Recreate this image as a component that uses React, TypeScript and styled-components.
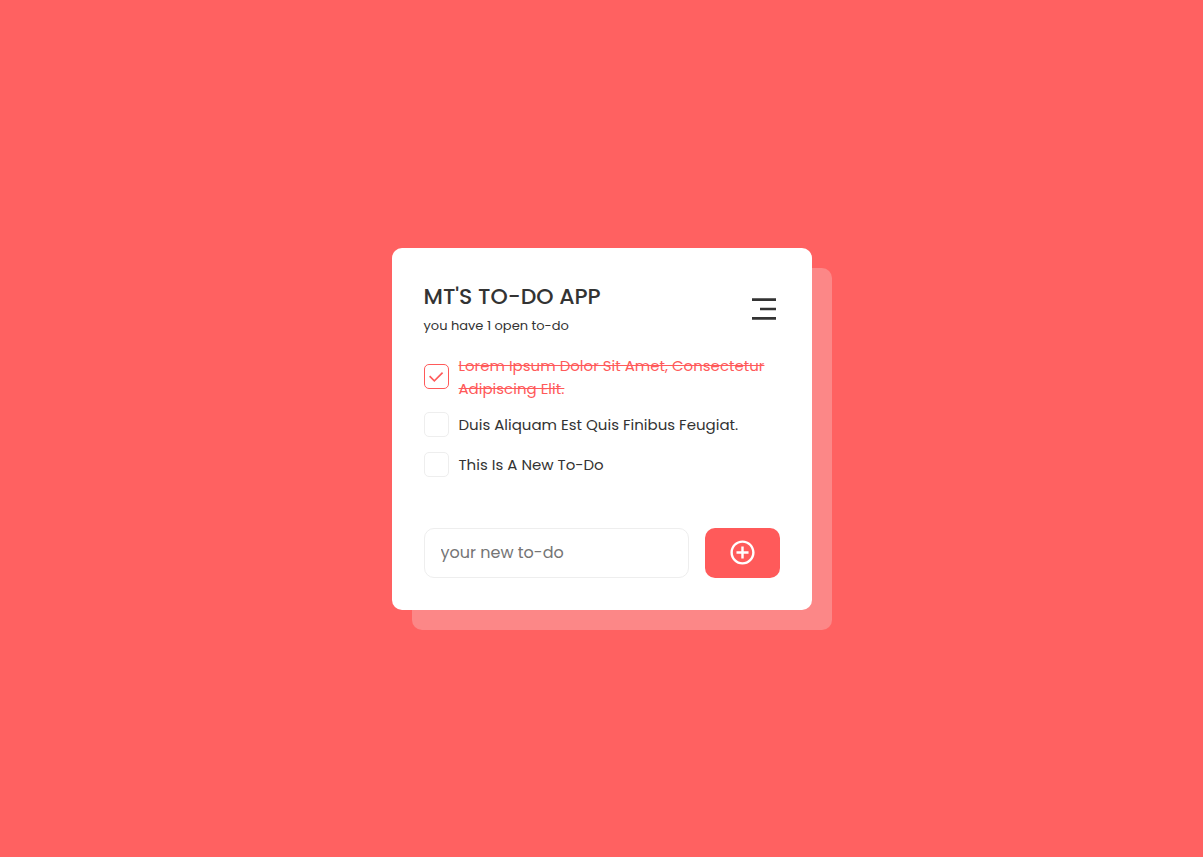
import { useState } from "react";
import type { FormEvent } from "react";
import styled, { createGlobalStyle } from "styled-components";
import { RiAddCircleLine, RiCheckLine, RiMenu3Line } from "react-icons/ri";

const GlobalStyle = createGlobalStyle`
  *, *::before, *::after { box-sizing: border-box; }
  body {
    margin: 0;
    background: #ff6161;
    color: #333;
    font-family: Poppins, Inter, "Open Sans", sans-serif;
  }
  button, input { font: inherit; }
`;

const Page = styled.main`
  min-height: 100vh;
  display: flex;
  align-items: center;
  justify-content: center;
  padding: 24px;
`;

const Card = styled.section`
  width: 100%;
  max-width: 420px;
  padding: 32px;
  border-radius: 10px;
  background: #fff;
  box-shadow: 20px 20px 0 #fc8787;
`;

const Header = styled.header`
  display: flex;
  align-items: center;
  justify-content: space-between;
  margin-bottom: 15px;
`;

const Title = styled.h1`
  margin: 0;
  font-size: 22px;
  font-weight: 500;
  line-height: 33px;
  text-transform: uppercase;
`;

const Summary = styled.p`
  margin: 0;
  font-size: 13px;
  line-height: 26px;
`;

const MenuButton = styled.button`
  display: flex;
  padding: 0;
  border: 0;
  background: none;
  color: #333;
  cursor: pointer;
`;

const List = styled.ul`
  display: flex;
  flex-direction: column;
  gap: 10px;
  margin: 0 0 48px;
  padding: 0;
  list-style: none;
`;

const Item = styled.label<{ $done: boolean }>`
  display: flex;
  align-items: center;
  gap: 10px;
  min-height: 30px;
  font-size: 15px;
  line-height: 23px;
  text-transform: capitalize;
  text-decoration: ${(p) => (p.$done ? "line-through" : "none")};
  color: ${(p) => (p.$done ? "#ff5a5a" : "inherit")};
  cursor: pointer;
`;

const CheckBox = styled.span`
  display: grid;
  flex: none;
  place-items: center;
  width: 25px;
  height: 25px;

  > * { grid-area: 1 / 1; }
  svg { pointer-events: none; }
`;

const CheckInput = styled.input`
  appearance: none;
  width: 25px;
  height: 25px;
  margin: 0;
  border: 1px solid #eee;
  border-radius: 5px;
  cursor: pointer;

  &:checked { border-color: #ff5a5a; }
`;

const Form = styled.form`
  display: flex;
  gap: 16px;
  height: 50px;
`;

const TextField = styled.input`
  flex: 1;
  min-width: 0;
  padding: 0 16px;
  border: 1px solid #eee;
  border-radius: 10px;
  background: #fff;
  color: #333;
  font-size: 16px;
  outline: none;

  &::placeholder { color: #757575; }
`;

const AddButton = styled.button`
  display: flex;
  align-items: center;
  justify-content: center;
  width: 75px;
  padding: 0;
  border: 0;
  border-radius: 10px;
  background: #ff5a5a;
  color: #fff;
  cursor: pointer;
`;

interface Todo {
  id: number;
  text: string;
  done: boolean;
}

const initialTodos: Todo[] = [
  { id: 1, text: "Lorem ipsum dolor sit amet, consectetur adipiscing elit.", done: true },
  { id: 2, text: "Duis aliquam est quis finibus feugiat.", done: false },
  { id: 3, text: "This is a new to-do", done: false },
];

export default function App() {
  const [todos, setTodos] = useState(initialTodos);
  const [draft, setDraft] = useState("");

  const toggle = (id: number) =>
    setTodos((all) => all.map((t) => (t.id === id ? { ...t, done: !t.done } : t)));

  const add = (event: FormEvent) => {
    event.preventDefault();
    const text = draft.trim();
    if (!text) return;
    setTodos((all) => [...all, { id: all.length + 1, text, done: false }]);
    setDraft("");
  };

  const completed = todos.filter((t) => t.done).length;

  return (
    <>
      <GlobalStyle />
      <Page>
        <Card>
          <Header>
            <div>
              <Title>MT's to-do app</Title>
              <Summary>you have {completed} open to-do</Summary>
            </div>
            <MenuButton type="button" aria-label="Menu">
              <RiMenu3Line size={32} />
            </MenuButton>
          </Header>
          <List>
            {todos.map((todo) => (
              <li key={todo.id}>
                <Item $done={todo.done}>
                  <CheckBox>
                    <CheckInput
                      type="checkbox"
                      checked={todo.done}
                      onChange={() => toggle(todo.id)}
                    />
                    {todo.done && <RiCheckLine size={20} />}
                  </CheckBox>
                  <span>{todo.text}</span>
                </Item>
              </li>
            ))}
          </List>
          <Form onSubmit={add}>
            <TextField
              type="text"
              aria-label="New to-do"
              placeholder="your new to-do"
              value={draft}
              onChange={(e) => setDraft(e.target.value)}
            />
            <AddButton type="submit" aria-label="Add to-do">
              <RiAddCircleLine size={29} />
            </AddButton>
          </Form>
        </Card>
      </Page>
    </>
  );
}
